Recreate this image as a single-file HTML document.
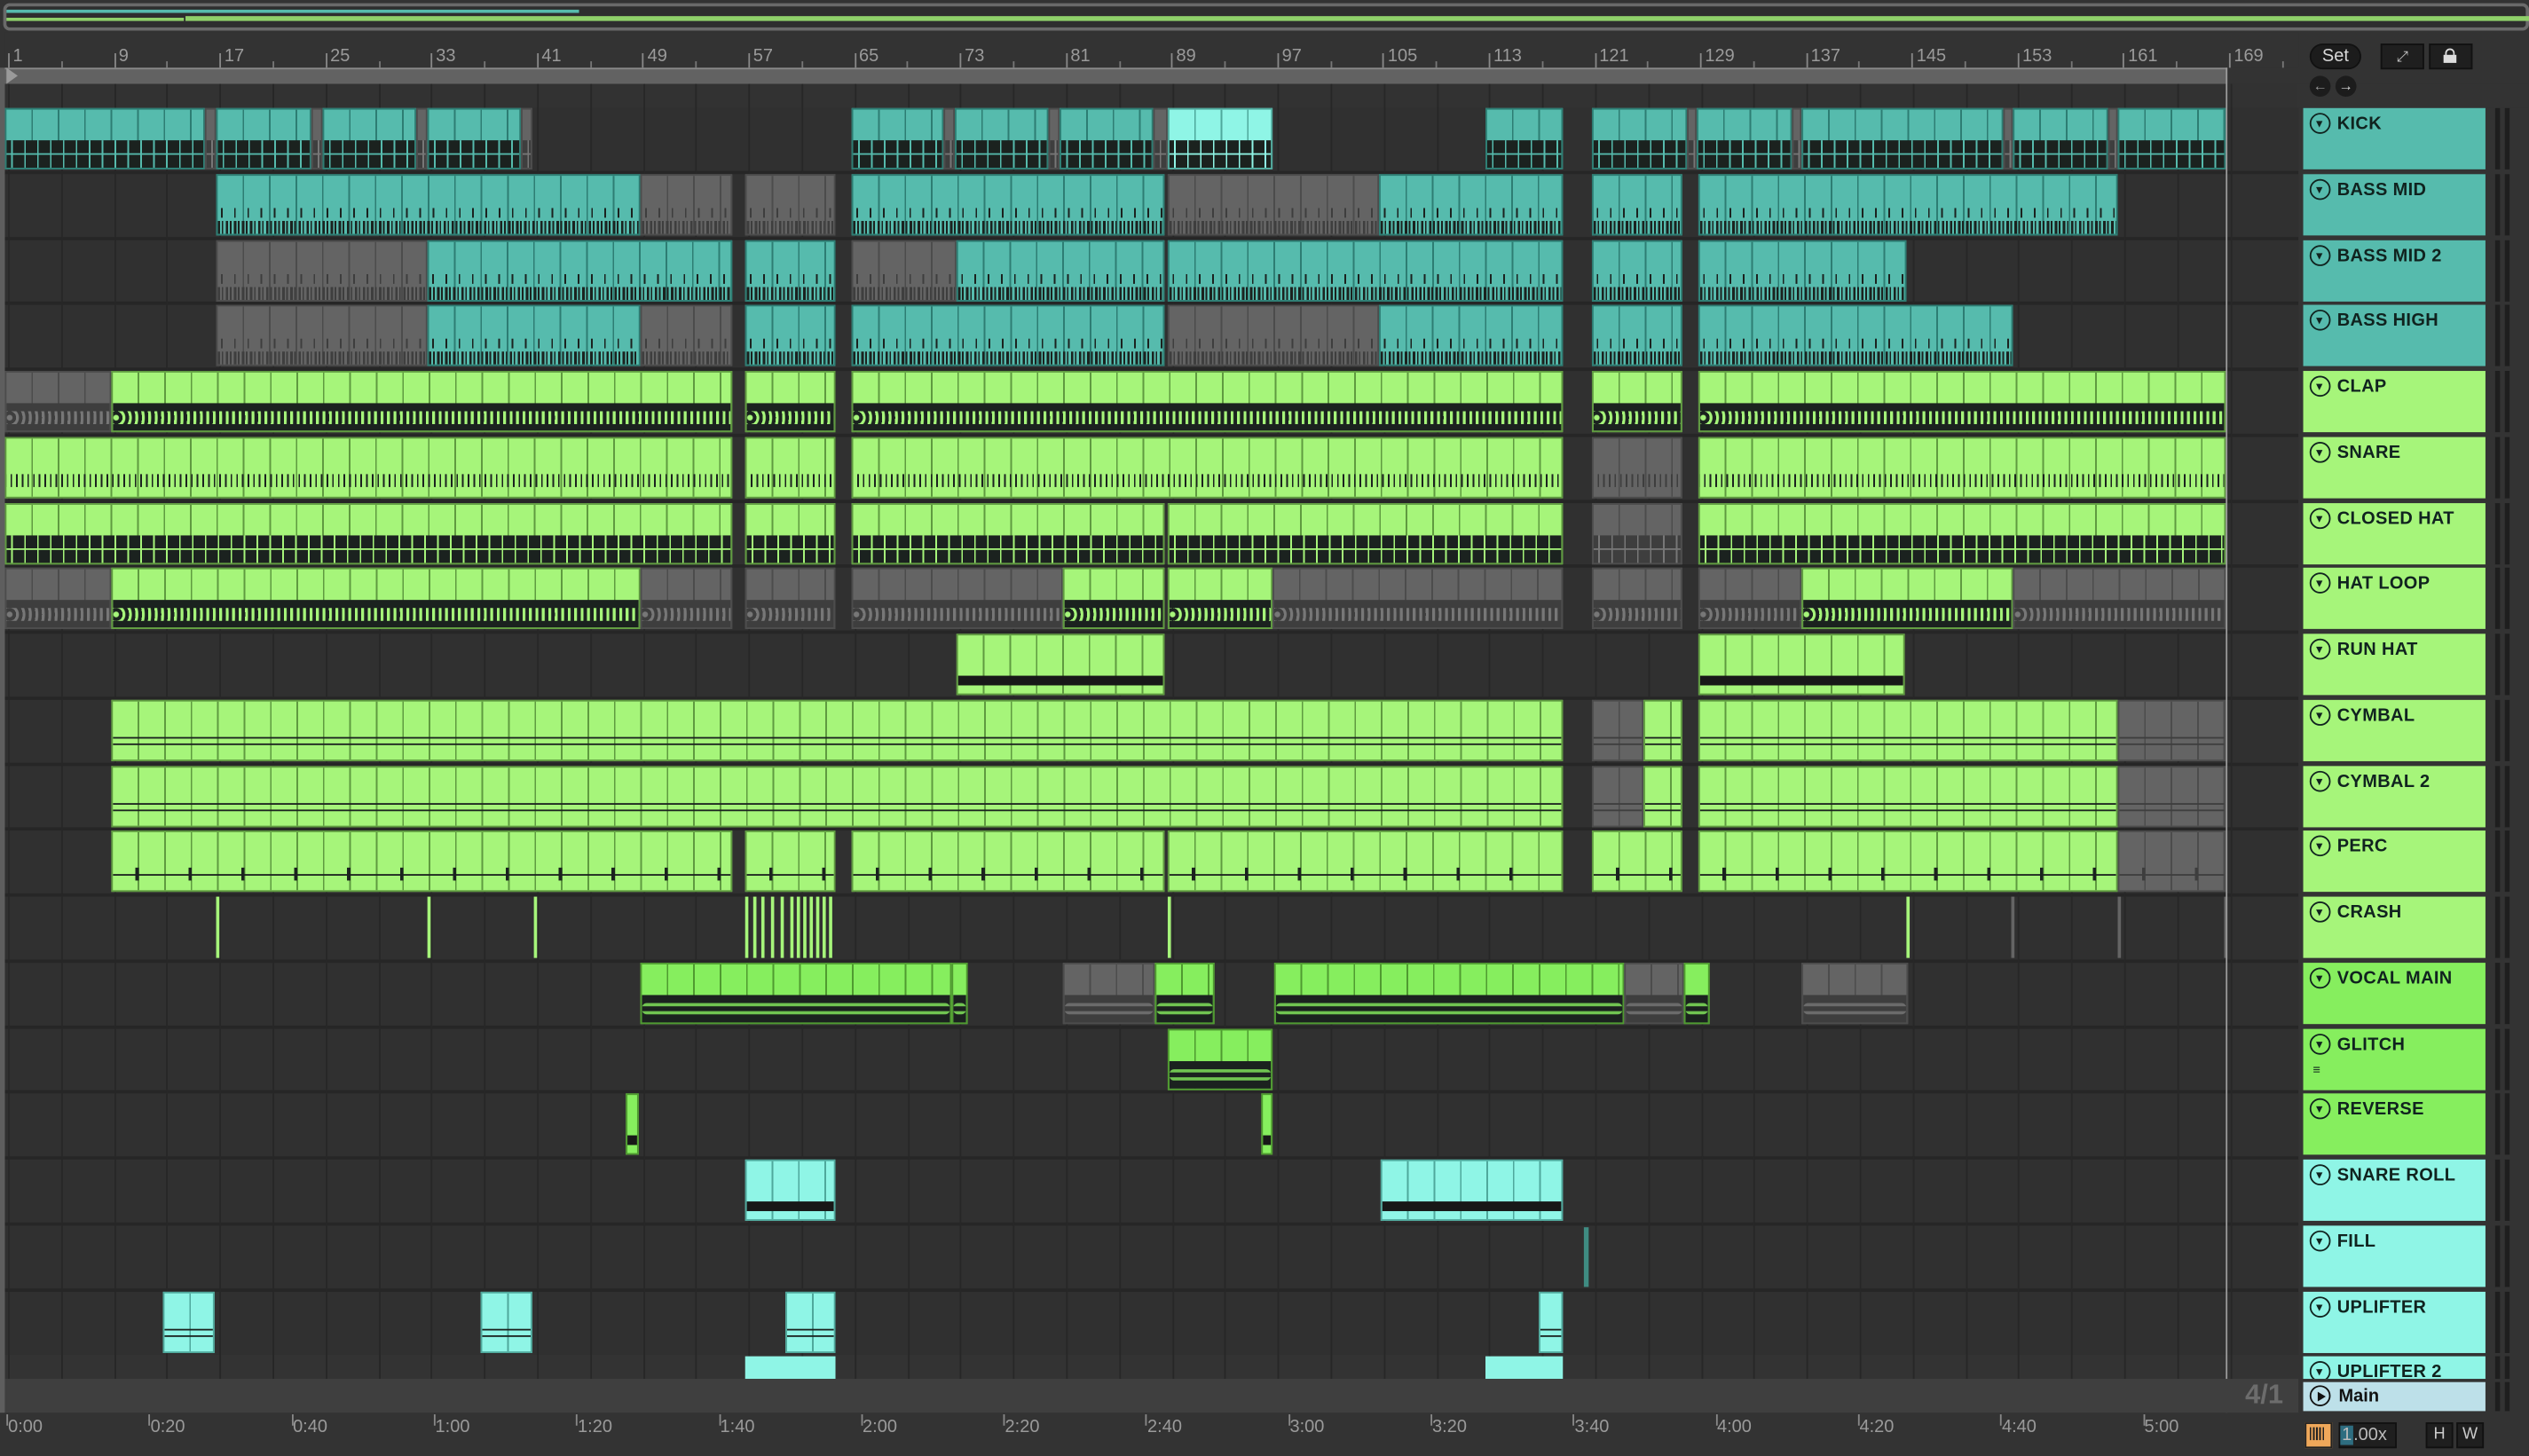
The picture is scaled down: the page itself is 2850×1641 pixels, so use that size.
<!DOCTYPE html>
<html><head><meta charset="utf-8">
<style>
html,body{margin:0;padding:0;background:#2b2b2b;width:2850px;height:1640px;overflow:hidden}
#s{position:absolute;left:0;top:0;width:1568px;height:903px;transform:scale(1.81760);transform-origin:0 0;background:#333;font-family:"Liberation Sans",sans-serif;overflow:hidden}
.a{position:absolute}
.hd{position:absolute;left:1428px;width:113px;color:#10231f;font-weight:bold;font-size:11px;letter-spacing:.2px}
.hd span{position:absolute;left:21px;top:4px}
.hd i{position:absolute;left:4px;top:3px;width:11px;height:11px;border:1.3px solid #10231f;border-radius:50%}
.hd i:after{content:"";position:absolute;left:3px;top:4px;border-left:2.7px solid transparent;border-right:2.7px solid transparent;border-top:4px solid #10231f}
.mt{position:absolute;left:1547px;width:3px;background:#1e1e1e}
.rl{position:absolute;top:29px;color:#9a9a9a;font-size:11px}
.tl{position:absolute;top:879px;color:#9a9a9a;font-size:11px}
</style></head><body>
<div id="s">
<!-- overview -->
<div class="a" style="left:2px;top:2px;width:1566px;height:17px;border:2px solid #6a6a6a;border-radius:4px;box-sizing:border-box;background:#2e2e2e"></div>
<div class="a" style="left:4px;top:6px;width:355px;height:2px;background:#56bbad"></div>
<div class="a" style="left:115px;top:10px;width:1500px;height:3px;background:#8fd06a"></div>
<div class="a" style="left:4px;top:11px;width:110px;height:2px;background:#8fd06a"></div>
<div class="a" style="left:170px;top:24px;width:1px;height:0"></div>
<!-- ruler -->
<div class="a" style="left:3px;top:20px;width:1422px;height:22px;background:#333"></div>
<div id="ruler"></div>
<div class="a" style="left:3px;top:42px;width:1378px;height:10px;background:#626262;border-top:1px solid #8a8a8a;border-bottom:1px solid #8a8a8a"></div>
<div class="a" style="left:4px;top:42px;width:0;height:0;border-top:5px solid transparent;border-bottom:5px solid transparent;border-left:7px solid #9a9a9a"></div>
<div id="grid"></div>
<div id="clips"></div>
<div class="a" style="left:1380px;top:42px;width:1px;height:834px;background:#9b9b9b"></div>
<div class="a" style="left:1,px;top:42px;width:3px;height:834px;background:#555"></div>
<div class="a" style="left:0;top:42px;width:3px;height:855px;background:#5e5e5e"></div>
<!-- right panel controls -->
<div class="a" style="left:1424px;top:52px;width:144px;height:15px;background:#333"></div>
<div class="a" style="left:1432px;top:27px;width:30px;height:14px;border-radius:8px;background:#1c1c1c;color:#d8d8d8;font-size:11px;text-align:center;line-height:14px;border:1px solid #111">Set</div>
<div class="a" style="left:1476px;top:27px;width:25px;height:14px;background:#1f1f1f;border:1px solid #111;color:#ccc;font-size:9px;text-align:center;line-height:14px">⤢</div>
<div class="a" style="left:1506px;top:27px;width:25px;height:14px;background:#1f1f1f;border:1px solid #111"><div class="a" style="left:8px;top:6px;width:8px;height:5px;background:#ddd"></div><div class="a" style="left:9px;top:2px;width:4px;height:4px;border:1px solid #ddd;border-bottom:none;border-radius:3px 3px 0 0"></div></div>
<div class="a" style="left:1432px;top:47px;width:13px;height:13px;border-radius:50%;background:#1c1c1c;color:#999;font-size:9px;text-align:center;line-height:13px">←</div>
<div class="a" style="left:1448px;top:47px;width:13px;height:13px;border-radius:50%;background:#1c1c1c;color:#ddd;font-size:9px;text-align:center;line-height:13px">→</div>
<div id="heads"></div>
<!-- bottom -->
<div class="a" style="left:3px;top:855px;width:1422px;height:21px;background:#3f3f3f"></div>
<div class="a" style="left:1392px;top:855px;color:#6c6c6c;font-size:17px;font-weight:bold">4/1</div>
<div class="a" style="left:1428px;top:857px;width:113px;height:18px;background:#bde0e9"></div>
<div class="a" style="left:1432px;top:859px;width:11px;height:11px;border:1.3px solid #111;border-radius:50%"><div class="a" style="left:4px;top:2.5px;border-top:3px solid transparent;border-bottom:3px solid transparent;border-left:5px solid #111"></div></div>
<div class="a" style="left:1450px;top:860px;font-size:11px;font-weight:bold;color:#111">Main</div>
<div class="mt" style="top:857px;height:18px"></div><div class="mt" style="left:1553px;top:857px;height:18px"></div>
<div class="a" style="left:0;top:876px;width:1568px;height:27px;background:#333"></div>
<div id="times"></div>
<div class="a" style="left:1429px;top:882px;width:15px;height:14px;background:#f0a85a;border:1px solid #222"></div>
<div class="a" style="left:1432px;top:885px;width:9px;height:8px;background:repeating-linear-gradient(90deg,#222 0 1px,transparent 1px 2px)"></div>
<div class="a" style="left:1450px;top:882px;width:34px;height:14px;background:#1f1f1f;border:1px solid #111;color:#bbb;font-size:11px;line-height:14px"><span style="background:#2e6d80;padding:0 1px">1</span>.00x</div>
<div class="a" style="left:1504px;top:882px;width:15px;height:14px;background:#1f1f1f;border:1px solid #111;color:#ccc;font-size:10px;text-align:center;line-height:14px">H</div>
<div class="a" style="left:1523px;top:882px;width:15px;height:14px;background:#1f1f1f;border:1px solid #111;color:#ccc;font-size:10px;text-align:center;line-height:14px">W</div>
</div>
<script>
const R=40.75,T0=67;
function d(p,x,y,w,h,c,extra){const e=document.createElement('div');e.className='a';e.style.cssText=`left:${x}px;top:${y}px;width:${w}px;height:${h}px;background:${c};${extra||''}`;document.getElementById(p).appendChild(e);return e;}
// ruler
const nums=[1,9,17,25,33,41,49,57,65,73,81,89,97,105,113,121,129,137,145,153,161,169];
let rh='';nums.forEach((n,i)=>{const x=5+i*65.57;rh+=`<div class="rl" style="left:${x+3}px">${n}</div><div class="a" style="left:${x}px;top:33px;width:1px;height:9px;background:#888"></div><div class="a" style="left:${x+32.8}px;top:38px;width:1px;height:4px;background:#777"></div>`;});
document.getElementById('ruler').innerHTML=rh;
// grid
for(let i=0;i<19;i++){const y=T0+i*R;d('grid',3,y-2,1422,41,'#303030');d('grid',3,y-2,1422,2,'#262626');}
d('grid',3,52,1422,15,'#323232');
for(let i=0;i<43;i++){const x=5+i*32.8;d('grid',x,52,1,803,'#272727');}
// times
const tl=['0:00','0:20','0:40','1:00','1:20','1:40','2:00','2:20','2:40','3:00','3:20','3:40','4:00','4:20','4:40','5:00'];
let th='';tl.forEach((t,i)=>{const x=5+i*88.3;th+=`<div class="tl" style="left:${x}px">${t}</div><div class="a" style="left:${x-1}px;top:877px;width:1px;height:7px;background:#888"></div>`;});
document.getElementById('times').innerHTML=th;
const TE='#56bbad',GR='#a6f57a',VG='#86ee5e',CY='#8ff5e6',GY='#646464';
const bord={[TE]:'#2d7d73',[GR]:'#5f9a40',[VG]:'#4f9a30',[CY]:'#4fa89c',[GY]:'#4c4c4c'};
function clip(row,x1,x2,c,type){const y=T0+row*R;const w=x2-x1;const e=d('clips',x1,y,w,38,c,`box-sizing:border-box;border:1px solid ${bord[c]};overflow:hidden`);
 // bar lines
 let g=`<div class="a" style="left:0;top:0;width:100%;height:100%;background:repeating-linear-gradient(90deg,transparent 0 15.4px,${bord[c]} 15.4px 16.4px)"></div>`;
 const dk=c==GY?'#3e3e3e':'#1b221f';const lc=c==GY?'#777':c;
 if(type=='w')g+=`<div class="a" style="left:0;top:19px;width:100%;height:18px;background:${dk}"></div><div class="a" style="left:0;top:27px;width:100%;height:1px;background:${lc}"></div><div class="a" style="left:0;top:19px;width:100%;height:18px;background:repeating-linear-gradient(90deg,transparent 0 3px,${lc} 3px 4px,transparent 4px 8px)";opacity:.5"></div>`;
 if(type=='b')g+=`<div class="a" style="left:0;top:28px;width:100%;height:8px;background:repeating-linear-gradient(90deg,${dk} 0 1.5px,transparent 1.5px 2.5px,${dk} 2.5px 3.5px,transparent 3.5px 5px)"></div><div class="a" style="left:0;top:20px;width:100%;height:6px;background:repeating-linear-gradient(90deg,transparent 0 2px,${dk} 2px 3px,transparent 3px 8.2px)"></div>`;
 if(type=='s')g+=`<div class="a" style="left:0;top:22px;width:100%;height:8px;background:repeating-linear-gradient(90deg,transparent 0 2.5px,${dk} 2.5px 3.5px)"></div>`;
 if(type=='h')g+=`<div class="a" style="left:0;top:19px;width:100%;height:18px;background:${dk}"></div><div class="a" style="left:0;top:24px;width:100%;height:8px;background:repeating-radial-gradient(circle at 2px 4px,${lc} 0 1.5px,transparent 2px 4px)"></div>`;
 if(type=='r')g+=`<div class="a" style="left:0;top:25px;width:100%;height:6px;background:#181818"></div>`;
 if(type=='l')g+=`<div class="a" style="left:0;top:22px;width:100%;height:1px;background:${dk}"></div><div class="a" style="left:0;top:26px;width:100%;height:1px;background:${dk}"></div>`;
 if(type=='p')g+=`<div class="a" style="left:0;top:22px;width:100%;height:8px;background:repeating-linear-gradient(90deg,transparent 0 14px,${dk} 14px 16px,transparent 16px 32.8px)"></div><div class="a" style="left:0;top:26px;width:100%;height:1px;background:${dk}"></div>`;
 if(type=='v')g+=`<div class="a" style="left:0;top:19px;width:100%;height:18px;background:${dk}"></div><div class="a" style="left:0;top:24px;width:100%;height:7px;background:${lc};border-radius:3px;opacity:.8"></div><div class="a" style="left:0;top:26px;width:100%;height:3px;background:${dk}"></div>`;
 e.innerHTML=g;}
function L(row,arr,type){arr.forEach(a=>clip(row,a[0],a[1],a[2],type));}
L(0,[[3,127,TE],[127,134,GY],[134,193,TE],[193,200,GY],[200,258,TE],[258,265,GY],[265,323,TE],[323,330,GY],[528,585,TE],[585,592,GY],[592,650,TE],[650,657,GY],[657,715,TE],[715,724,GY],[724,789,CY],[921,969,TE],[987,1046,TE],[1046,1052,GY],[1052,1111,TE],[1111,1117,GY],[1117,1242,TE],[1242,1248,GY],[1248,1307,TE],[1307,1313,GY],[1313,1380,TE]],'w');
L(1,[[134,397,TE],[397,454,GY],[462,518,GY],[528,722,TE],[724,855,GY],[855,969,TE],[987,1043,TE],[1053,1313,TE]],'b');
L(2,[[134,265,GY],[265,454,TE],[462,518,TE],[528,593,GY],[593,722,TE],[724,969,TE],[987,1043,TE],[1053,1182,TE]],'b');
L(3,[[134,265,GY],[265,397,TE],[397,454,GY],[462,518,TE],[528,722,TE],[724,855,GY],[855,969,TE],[987,1043,TE],[1053,1248,TE]],'b');
L(4,[[3,69,GY],[69,454,GR],[462,518,GR],[528,969,GR],[987,1043,GR],[1053,1380,GR]],'h');
L(5,[[3,454,GR],[462,518,GR],[528,969,GR],[987,1043,GY],[1053,1380,GR]],'s');
L(6,[[3,454,GR],[462,518,GR],[528,722,GR],[724,969,GR],[987,1043,GY],[1053,1380,GR]],'w');
L(7,[[3,69,GY],[69,397,GR],[397,454,GY],[462,518,GY],[528,659,GY],[659,722,GR],[724,789,GR],[789,969,GY],[987,1043,GY],[1053,1117,GY],[1117,1248,GR],[1248,1380,GY]],'h');
L(8,[[593,722,GR],[1053,1181,GR]],'r');
L(9,[[69,969,GR],[987,1019,GY],[1019,1043,GR],[1053,1313,GR],[1313,1380,GY]],'l');
L(10,[[69,969,GR],[987,1019,GY],[1019,1043,GR],[1053,1313,GR],[1313,1380,GY]],'l');
L(11,[[69,454,GR],[462,518,GR],[528,722,GR],[724,969,GR],[987,1043,GR],[1053,1313,GR],[1313,1380,GY]],'p');
[134,265,331,462,467,472,478,484,490,494,498,502,506,510,514,724,1182].forEach(x=>d('clips',x,T0+11*R+R,1.5,38,GR));
[1247,1313,1379].forEach(x=>d('clips',x,T0+12*R,1.5,38,GY));
L(13,[[397,590,VG],[590,600,VG],[659,716,GY],[716,753,VG],[790,1007,VG],[1007,1044,GY],[1044,1060,VG],[1117,1183,GY]],'v');
L(14,[[724,789,VG]],'v');
L(15,[[388,396,VG],[782,789,VG]],'r');
L(16,[[462,518,CY],[856,969,CY]],'r');
d('clips',982,T0+17*R+1,3,37,'#3f8c82');
L(18,[[101,133,CY],[298,330,CY],[487,518,CY],[954,969,CY]],'l');
const y19=T0+19*R;[[462,518],[921,969]].forEach(a=>d('clips',a[0],y19,a[1]-a[0],855-y19,CY));
// headers
const H=[['KICK',TE],['BASS MID',TE],['BASS MID 2',TE],['BASS HIGH',TE],['CLAP',GR],['SNARE',GR],['CLOSED HAT',GR],['HAT LOOP',GR],['RUN HAT',GR],['CYMBAL',GR],['CYMBAL 2',GR],['PERC',GR],['CRASH',GR],['VOCAL MAIN',VG],['GLITCH',VG],['REVERSE',VG],['SNARE ROLL',CY],['FILL',CY],['UPLIFTER',CY],['UPLIFTER 2',CY]];
let hh='';H.forEach((h,i)=>{const y=T0+i*R;const ht=Math.min(38,855-y);hh+=`<div class="hd" style="top:${y}px;height:${ht}px;background:${h[1]};overflow:hidden"><i></i><span>${h[0]}</span>${h[0]=='GLITCH'?'<b style="position:absolute;left:6px;top:21px;font-size:8px">≡</b>':''}</div><div class="mt" style="top:${y}px;height:${ht}px"></div><div class="mt" style="left:1553px;top:${y}px;height:${ht}px"></div>`;});
document.getElementById('heads').innerHTML=hh;
</script>
</body></html>
